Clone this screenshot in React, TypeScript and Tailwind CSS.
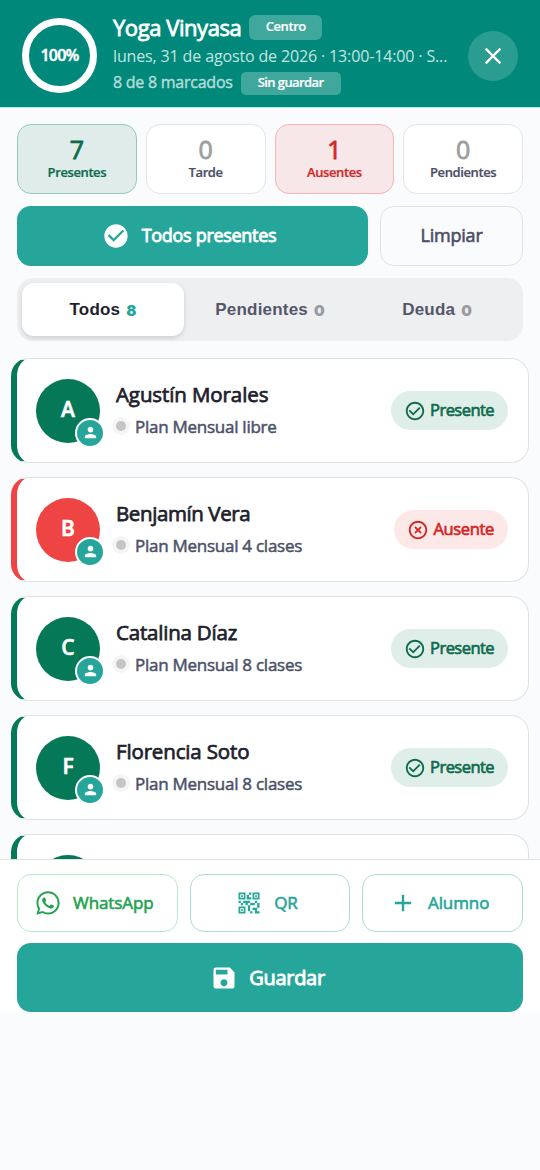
import type { ReactNode } from "react";
import {
  MdAdd,
  MdCheckCircle,
  MdCheckCircleOutline,
  MdClose,
  MdHighlightOff,
  MdPerson,
  MdQrCode2,
  MdSave,
  MdWhatsapp,
} from "react-icons/md";

type Student = { name: string; plan: string; present: boolean; nameClass: string };

const students: Student[] = [
  { name: "Agustín Morales", plan: "Plan Mensual libre", present: true, nameClass: "tracking-[-0.1px]" },
  { name: "Benjamín Vera", plan: "Plan Mensual 4 clases", present: false, nameClass: "tracking-[-0.4px]" },
  { name: "Catalina Díaz", plan: "Plan Mensual 8 clases", present: true, nameClass: "tracking-[-0.2px]" },
  { name: "Florencia Soto", plan: "Plan Mensual 8 clases", present: true, nameClass: "tracking-[-0.15px]" },
];

function Stat({ value, label, box, num, text }: { value: number; label: string; box: string; num: string; text: string }) {
  return (
    <div className={`flex h-[70px] flex-col items-center rounded-[14px] border pt-[9px] ${box}`}>
      <span className={`text-[25px] leading-[30px] [-webkit-text-stroke:0.8px] ${num}`}>{value}</span>
      <span className={`mt-[1px] text-[13px] leading-[15px] font-semibold tracking-[-0.4px] [-webkit-text-stroke:0.2px] ${text}`}>{label}</span>
    </div>
  );
}

function Tab({ label, count, active }: { label: string; count: number; active?: boolean }) {
  return (
    <div
      className={`flex h-[53px] items-center justify-center gap-[6px] rounded-[12px] ${
        active ? "bg-white text-[#1f1f2e] shadow-[0_2px_5px_rgba(0,0,0,0.14)]" : "text-[#55566a]"
      }`}
    >
      <span className="font-['Liberation_Sans',sans-serif] text-[17px] font-bold tracking-[0.2px]">{label}</span>
      <span className={`relative top-[2px] font-['Inter',sans-serif] text-[15px] font-black ${active ? "text-[#26a69a]" : "text-[#999b9f]"}`}>
        {count}
      </span>
    </div>
  );
}

function CardShell({ present, children }: { present: boolean; children: ReactNode }) {
  return (
    <div
      className={`flex h-[105px] shrink-0 items-center rounded-[18px] border border-l-[6px] border-[#dfe2e5] bg-white pr-[20px] pl-[19px] ${
        present ? "border-l-[#047857]" : "border-l-[#ef4444]"
      }`}
    >
      {children}
    </div>
  );
}

function Avatar({ present, initial }: { present: boolean; initial?: string }) {
  return (
    <div
      className={`relative flex size-[64px] shrink-0 items-center justify-center rounded-full pb-[1px] text-[21px] font-semibold text-white [-webkit-text-stroke:0.6px] ${
        present ? "bg-[#047857]" : "bg-[#ef4444]"
      }`}
    >
      {initial}
      <span className="absolute -right-[5px] -bottom-[5px] flex size-[30px] items-center justify-center rounded-full border-2 border-white bg-[#26a69a]">
        <MdPerson className="size-[17px] [stroke-width:0]" />
      </span>
    </div>
  );
}

function StudentCard({ student }: { student: Student }) {
  const { present } = student;
  return (
    <CardShell present={present}>
      <Avatar present={present} initial={student.name[0]} />
      <div className="ml-[16px] flex flex-1 flex-col">
        <span className={`text-[20.5px] leading-[28px] whitespace-nowrap text-[#1f1f2e] [-webkit-text-stroke:0.75px] ${student.nameClass}`}>
          {student.name}
        </span>
        <div className="mt-[3px] flex items-center">
          <span className="-ml-[4px] flex size-[18px] items-center justify-center rounded-full bg-[#f5f5f5]">
            <span className="size-[10px] rounded-full bg-[#c4c5c6]" />
          </span>
          <span className="ml-[5px] pt-[1px] text-[17px] leading-[29px] tracking-[-0.26px] whitespace-nowrap text-[#4b5168] [-webkit-text-stroke:0.5px]">
            {student.plan}
          </span>
        </div>
      </div>
      <div
        className={`flex h-[39px] items-center rounded-full pr-[14px] pl-[13px] text-[16.5px] [-webkit-text-stroke:0.65px] ${
          present ? "gap-[4px] bg-[#e0eeea] tracking-[-0.55px] text-[#0b6b4b]" : "gap-[5px] bg-[#fde8e8] tracking-[-0.35px] text-[#d32626]"
        }`}
      >
        {present ? <MdCheckCircleOutline className="size-[22px] [stroke-width:0]" /> : <MdHighlightOff className="size-[22px] [stroke-width:0]" />}
        <span>{present ? "Presente" : "Ausente"}</span>
      </div>
    </CardShell>
  );
}

function ActionButton({ icon, label, className }: { icon: ReactNode; label: string; className: string }) {
  return (
    <button
      className={`flex h-[58px] items-center justify-center gap-[11px] rounded-[14px] border pr-[7px] text-[17px] tracking-[-0.1px] [-webkit-text-stroke:0.6px] ${className}`}
    >
      {icon}
      <span>{label}</span>
    </button>
  );
}

export default function App() {
  return (
    <div className="flex h-[1170px] w-[540px] flex-col overflow-hidden bg-[#fafbfd] font-['Open_Sans','Noto_Sans',sans-serif]">
      <header className="flex h-[107px] shrink-0 items-center bg-[#00897b] pr-[22px] pl-[22px] text-white shadow-[0_1px_0_#b2ece5]">
        <div className="relative top-[2px] flex size-[75px] shrink-0 items-center justify-center rounded-full border-[7px] border-white pb-[2px] text-[16px] font-semibold tracking-[-0.85px] [-webkit-text-stroke:0.5px]">
          100%
        </div>
        <div className="ml-[16px] flex w-[335px] flex-col pt-[2px]">
          <div className="flex h-[28px] items-center gap-[8px]">
            <span className="text-[22px] tracking-[-0.44px] [-webkit-text-stroke:0.8px]">Yoga Vinyasa</span>
            <span className="flex h-[25px] w-[73px] items-center justify-center rounded-[6px] bg-[#40a79c] text-[13px] font-semibold tracking-[-0.4px] [-webkit-text-stroke:0.2px]">
              Centro
            </span>
          </div>
          <div className="pt-[3px] text-[16px] leading-[24px] tracking-[-0.14px] whitespace-nowrap text-[#c5e5e1]">
            lunes, 31 de agosto de 2026 · 13:00-14:00 · S...
          </div>
          <div className="flex h-[28px] items-center gap-[8px]">
            <span className="text-[16px] tracking-[-0.25px] text-[#b5ddd9] [-webkit-text-stroke:0.4px]">8 de 8 marcados</span>
            <span className="relative top-[1px] flex h-[23px] w-[100px] items-center justify-center rounded-[5px] bg-[#40a79c] text-[13px] font-semibold tracking-[-0.6px] [-webkit-text-stroke:0.2px]">
              Sin guardar
            </span>
          </div>
        </div>
        <button aria-label="Cerrar" className="relative top-[2px] ml-auto flex size-[50px] items-center justify-center rounded-full bg-[#2b9c90]">
          <MdClose className="size-[28px]" />
        </button>
      </header>

      <section className="flex shrink-0 flex-col gap-[12px] px-[17px] pt-[17px]">
        <div className="grid grid-cols-4 gap-[9px]">
          <Stat value={7} label="Presentes" box="border-[#93cbb7] bg-[#dfecea]" num="text-[#0b6b4b]" text="text-[#0b6b4b]" />
          <Stat value={0} label="Tarde" box="border-[#e2e4e7] bg-white" num="text-[#9e9e9e]" text="text-[#4b4d66]" />
          <Stat value={1} label="Ausentes" box="border-[#f6b3b3] bg-[#f7e7e9]" num="text-[#d32626]" text="text-[#d32626]" />
          <Stat value={0} label="Pendientes" box="border-[#e2e4e7] bg-white" num="text-[#9e9e9e]" text="text-[#4b4d66]" />
        </div>
        <div className="flex h-[60px] gap-[12px]">
          <button className="flex w-[351px] items-center justify-center gap-[12px] rounded-[14px] bg-[#26a69a] pr-[7px] text-[18px] tracking-[-0.3px] text-white [-webkit-text-stroke:0.8px]">
            <MdCheckCircle className="size-[28px] [stroke-width:0]" />
            <span className="pb-[2px]">Todos presentes</span>
          </button>
          <button className="flex flex-1 items-center justify-center rounded-[14px] border border-[#dfe1e5] pb-[2px] text-[18px] tracking-[-0.2px] text-[#4b4d66] [-webkit-text-stroke:0.6px]">
            Limpiar
          </button>
        </div>
        <div className="grid h-[63px] grid-cols-3 gap-[5px] rounded-[16px] bg-[#eeeff1] p-[5px]">
          <Tab label="Todos" count={8} active />
          <Tab label="Pendientes" count={0} />
          <Tab label="Deuda" count={0} />
        </div>
      </section>

      <main className="mt-[17px] flex h-[501px] shrink-0 flex-col gap-[14px] overflow-hidden pr-[11px] pl-[11px]">
        {students.map((student) => (
          <StudentCard key={student.name} student={student} />
        ))}
        <CardShell present>
          <Avatar present />
        </CardShell>
      </main>

      <footer className="flex h-[153px] shrink-0 flex-col gap-[11px] border-t border-[#dfe2e5] bg-white px-[17px] pt-[14px]">
        <div className="grid grid-cols-3 gap-[12px]">
          <ActionButton icon={<MdWhatsapp className="size-[28px] [stroke-width:0]" />} label="WhatsApp" className="border-[#b4ecc8] text-[#22a34f]" />
          <ActionButton icon={<MdQrCode2 className="size-[28px] [stroke-width:0]" />} label="QR" className="border-[#addcd8] text-[#26a69a]" />
          <ActionButton icon={<MdAdd className="size-[28px] [stroke-width:0]" />} label="Alumno" className="border-[#addcd8] text-[#26a69a]" />
        </div>
        <button className="flex h-[69px] items-center justify-center gap-[11px] rounded-[14px] bg-[#26a69a] pr-[5px] text-[20px] tracking-[-0.3px] text-white [-webkit-text-stroke:0.9px]">
          <MdSave className="size-[28px] [stroke-width:0]" />
          <span>Guardar</span>
        </button>
      </footer>
    </div>
  );
}
